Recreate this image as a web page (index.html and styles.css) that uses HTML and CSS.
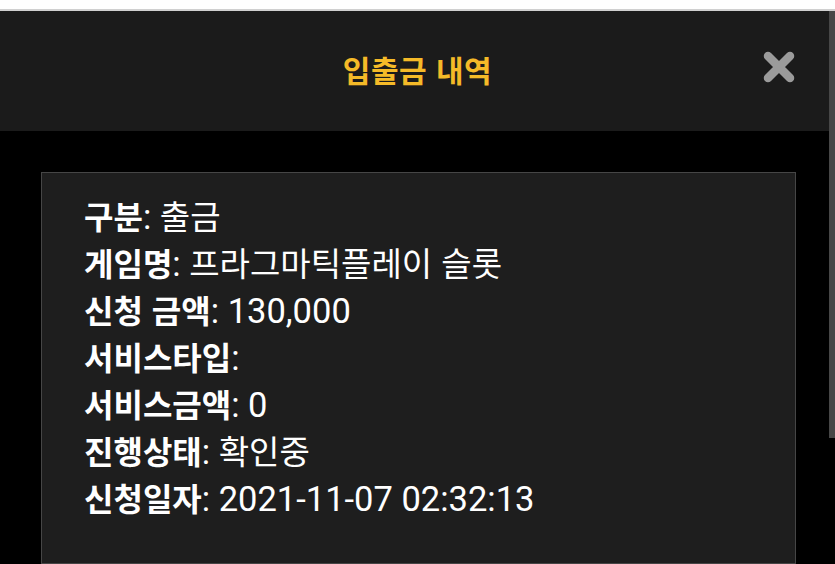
FILE: index.html
```html
<!DOCTYPE html>
<html lang="ko">
<head>
<meta charset="utf-8">
<link rel="stylesheet" href="styles.css">
</head>
<body>
<div class="topstrip"></div>
<header class="header">
  <h1 class="title">입출금 내역</h1>
  <button class="close" aria-label="닫기">
    <svg width="36" height="36" viewBox="0 0 36 36">
      <path d="M7 7 L29 29 M29 7 L7 29" stroke="#9b9b9b" stroke-width="8.5" stroke-linecap="round" fill="none"/>
    </svg>
  </button>
</header>
<main class="main">
  <section class="card">
    <div class="row"><b>구분</b><span class="num">: </span>출금</div>
    <div class="row"><b>게임명</b><span class="num">: </span>프라그마틱플레이 슬롯</div>
    <div class="row"><b>신청 금액</b><span class="num">: 130,000</span></div>
    <div class="row"><b>서비스타입</b><span class="num">:</span></div>
    <div class="row"><b>서비스금액</b><span class="num">: 0</span></div>
    <div class="row"><b>진행상태</b><span class="num">: </span>확인중</div>
    <div class="row"><b>신청일자</b><span class="num">: 2021-11-07 02:32:13</span></div>
  </section>
</main>
<div class="scrollthumb"></div>
</body>
</html>
```
FILE: styles.css
```css
html, body {
  margin: 0;
  padding: 0;
  background: #000;
  height: 564px;
  overflow: hidden;
}
body {
  font-family: Roboto, "Noto Sans CJK KR", sans-serif;
  position: relative;
}
.topstrip {
  height: 9px;
  background: #fff;
  border-bottom: 2px solid #d0d0d0;
}
.header {
  height: 120px;
  background: #1b1b1b;
  display: flex;
  align-items: center;
  justify-content: center;
  position: relative;
}
.title {
  margin: 0;
  font-family: "Noto Sans CJK KR", sans-serif;
  font-weight: 700;
  font-size: 30px;
  color: #f5ba28;
  padding-bottom: 4px;
  letter-spacing: 0.5px;
}
.close {
  position: absolute;
  right: 38px;
  top: 38px;
  width: 36px;
  height: 36px;
  padding: 0;
  border: 0;
  background: none;
}
.close svg { display: block; }
.main {
  padding: 41px 39px 0 41px;
}
.card {
  background: #1e1e1e;
  border: 1px solid #464646;
  padding: 19px 42px 41px;
  height: 330px;
  color: #fff;
  font-family: "Noto Sans CJK KR", sans-serif;
  font-size: 33px;
}
.row {
  line-height: 47px;
  height: 47px;
  white-space: nowrap;
}
.row b {
  font-weight: 700;
  font-size: 32px;
}
.num {
  font-family: Roboto, "Noto Sans CJK KR", sans-serif;
  font-size: 34.5px;
  font-weight: 400;
}
.scrollthumb {
  position: absolute;
  right: 0;
  top: 11px;
  width: 6px;
  height: 427px;
  background: #474747;
}
```
